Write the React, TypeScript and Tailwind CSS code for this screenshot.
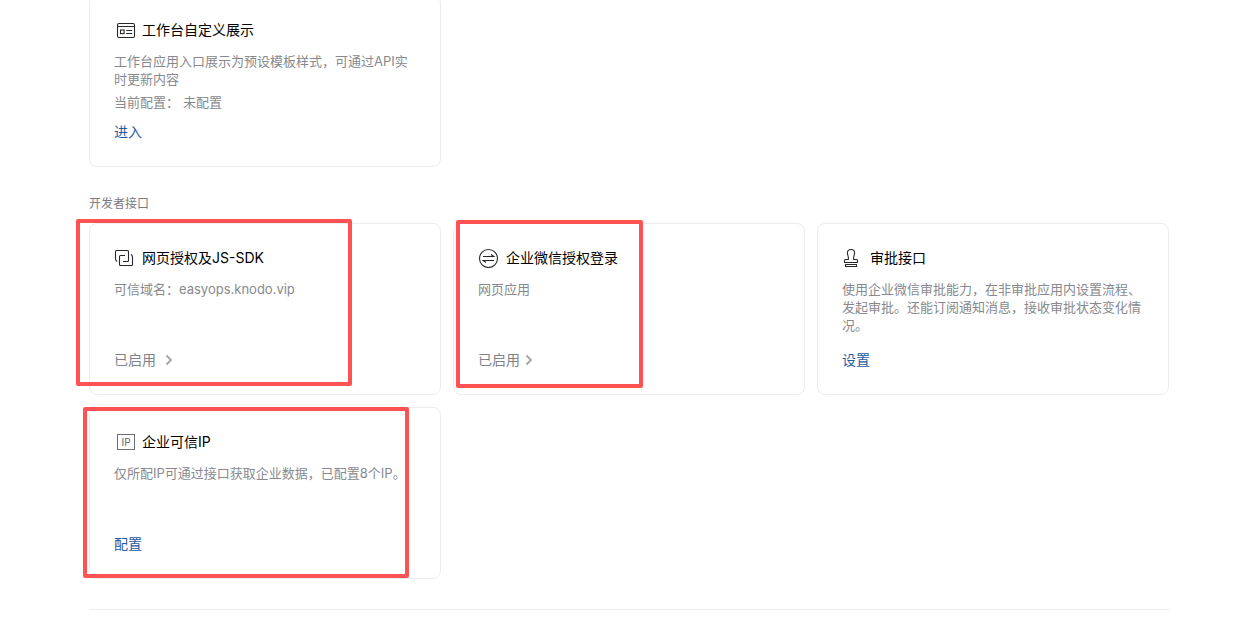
import type { ReactNode } from "react";

function DisplayIcon() {
  return (
    <svg viewBox="0 0 24 20" className="h-5 w-6 shrink-0" fill="none" stroke="#25272b" strokeWidth="1.1" aria-hidden="true">
      <rect x="3.5" y="3.5" width="17" height="14" rx="1.5" />
      <path d="M3.5 6.5h17M12.2 10.5h6M12.2 13.5h6" />
      <rect x="6.5" y="10" width="3.6" height="3.6" />
    </svg>
  );
}

function LinkIcon() {
  return (
    <svg viewBox="0 0 24 20" className="h-5 w-6 shrink-0" fill="none" stroke="#25272b" strokeWidth="1.1" strokeLinejoin="round" aria-hidden="true">
      <path d="M3.2 13.6Q1.5 12.8 1.5 11V3.5Q1.5 2.5 2.5 2.5H13.5Q14.5 2.5 14.5 3.5V12.5Q14.5 13.5 13.5 13.5H9" />
      <path d="M11 7.5H6.5Q5.5 7.5 5.5 8.5V16.5Q5.5 17.5 6.5 17.5H17.5Q18.5 17.5 18.5 16.5V9Q18.5 7.3 16.8 6.5" />
    </svg>
  );
}

function SwapIcon() {
  return (
    <svg viewBox="0 0 24 20" className="h-5 w-6 shrink-0" fill="none" stroke="#25272b" strokeWidth="1.1" aria-hidden="true">
      <circle cx="10.5" cy="10.5" r="9" />
      <path d="M5 8.5H15.8L13 6.5M16 12.5H5.2L8 14.5" />
    </svg>
  );
}

function StampIcon() {
  return (
    <svg viewBox="0 0 24 20" className="h-5 w-6 shrink-0" fill="none" stroke="#25272b" strokeWidth="1.1" strokeLinejoin="round" aria-hidden="true">
      <path d="M6.4 11.5C6.8 8.6 5.4 7.2 5.4 4.8C5.4 2.7 6.9 1.5 9 1.5S12.6 2.7 12.6 4.8C12.6 7.2 11.2 8.6 11.6 11.5H14.5Q15.5 11.5 15.5 12.5V14.5H2.5V12.5Q2.5 11.5 3.5 11.5Z" />
      <path d="M3.5 16.5h11v2h-11z" />
    </svg>
  );
}

function IpIcon() {
  return (
    <span className="flex w-6 shrink-0 justify-center" aria-hidden="true">
      <span className="flex h-4 w-[18px] items-center justify-center border border-[#6c6f75] text-[10px] leading-none text-[#5c5f65]">
        IP
      </span>
    </span>
  );
}

function Chevron() {
  return (
    <svg viewBox="0 0 8 12" className="h-3 w-2" fill="none" stroke="#a0a3a8" strokeWidth="1.8" aria-hidden="true">
      <path d="M1.5 1.5L6 6L1.5 10.5" />
    </svg>
  );
}

type CardProps = {
  icon: ReactNode;
  title: string;
  action: ReactNode;
  children: ReactNode;
  highlight?: string;
};

function Card({ icon, title, action, children, highlight }: CardProps) {
  return (
    <article className="relative flex min-h-[172px] flex-col rounded-lg border border-[#ebecee] p-6">
      <h3 className="flex items-center gap-1 text-sm leading-5 text-black">
        {icon}
        {title}
      </h3>
      <div className="mt-3 text-[13px] leading-[18px] text-[#87898e]">{children}</div>
      <div className="mt-auto flex text-sm leading-5">{action}</div>
      {highlight && (
        <div className={`pointer-events-none absolute rounded-xs border-4 border-[#ff5252] ${highlight}`} />
      )}
    </article>
  );
}

function ActionLink({ children }: { children: ReactNode }) {
  return (
    <a href="#" className="text-[#1d5ca3]">
      {children}
    </a>
  );
}

function EnabledLink({ gap }: { gap: string }) {
  return (
    <a href="#" className={`flex items-center text-[#808287] ${gap}`}>
      已启用
      <Chevron />
    </a>
  );
}

export default function App() {
  return (
    <main className="-mt-[5px] bg-white pr-[85px] pl-[89px] font-['Inter','Noto_Sans_CJK_SC',sans-serif]">
      <section className="grid grid-cols-3 gap-3">
        <Card icon={<DisplayIcon />} title="工作台自定义展示" action={<ActionLink>进入</ActionLink>}>
          <p>工作台应用入口展示为预设模板样式，可通过API实时更新内容</p>
          <p className="mt-[5px] flex gap-1">
            <span>当前配置：</span>
            <span>未配置</span>
          </p>
        </Card>
      </section>

      <section className="border-b border-[#ebecee] pt-7 pb-[30px]">
        <h2 className="mb-2.5 text-xs leading-[18px] text-[#787a7e]">开发者接口</h2>
        <div className="grid grid-cols-3 gap-3">
          <Card
            icon={<LinkIcon />}
            title="网页授权及JS-SDK"
            action={<EnabledLink gap="gap-[9px]" />}
            highlight="-top-[5px] -left-[14px] h-[167px] w-[276px]"
          >
            <p>可信域名：easyops.knodo.vip</p>
          </Card>
          <Card
            icon={<SwapIcon />}
            title="企业微信授权登录"
            action={<EnabledLink gap="gap-[5px]" />}
            highlight="-top-1 left-[2px] h-[168px] w-[187px]"
          >
            <p>网页应用</p>
          </Card>
          <Card icon={<StampIcon />} title="审批接口" action={<ActionLink>设置</ActionLink>}>
            <p>使用企业微信审批能力，在非审批应用内设置流程、发起审批。还能订阅通知消息，接收审批状态变化情况。</p>
          </Card>
          <Card
            icon={<IpIcon />}
            title="企业可信IP"
            action={<ActionLink>配置</ActionLink>}
            highlight="-top-px -left-[7px] h-[171px] w-[326px]"
          >
            <p>仅所配IP可通过接口获取企业数据，已配置8个IP。</p>
          </Card>
        </div>
      </section>
    </main>
  );
}
